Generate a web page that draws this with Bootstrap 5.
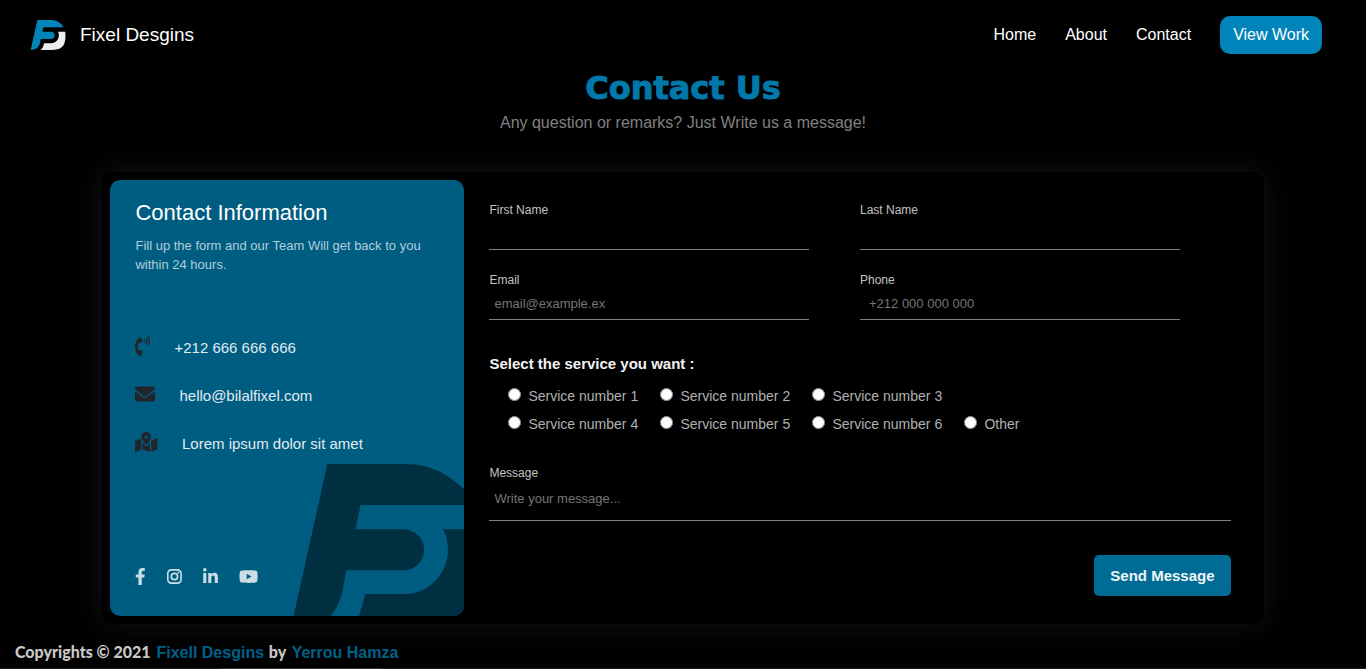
<!DOCTYPE html>
<html lang="en">
<head>
<meta charset="utf-8">
<meta name="viewport" content="width=device-width, initial-scale=1">
<title>Fixel Desgins - Contact</title>
<link href="https://cdn.jsdelivr.net/npm/bootstrap@5.3.0/dist/css/bootstrap.min.css" rel="stylesheet">
<style>
  body { background: #000; color: #fff; font-family: "Liberation Sans", Arial, sans-serif; }
  a { text-decoration: none; }
  .site-nav { min-height: 70px; padding: 0 44px 0 30px; }
  .brand { gap: 14px; }
  .brand-name { font-size: 19px; }
  .nav-links { gap: 29px; }
  .site-nav .nav-link { color: #fff; padding: 0; }
  .btn-work { background: #0084b9; color: #fff; border-radius: 10px; }
  .btn-work:hover { background: #00739f; color: #fff; }
  .page-title { font-family: "Arial Black", "DejaVu Sans", sans-serif; font-weight: 900; font-size: 32px; line-height: 36px; color: #0078a9; -webkit-text-stroke: 1px #0078a9; }
  .page-sub { color: #808080; line-height: 24px; margin-top: 5px; }
  .contact-box { width: 85%; margin-top: 37px; padding: 8px; border-radius: 10px; background: #000; box-shadow: 0 0 30px rgba(255, 255, 255, .08); }
  .info { width: 354px; min-height: 436px; padding: 17px 25px 31px; border-radius: 10px; background: #005d82; }
  .info h2 { font-size: 22px; line-height: 32px; font-weight: 400; }
  .info-lead { font-size: 13px; line-height: 19px; color: #b0cdd9; margin: 7px 0 0; }
  .info-list { margin: 50px 0 0; font-size: 15px; color: #e0ebf0; }
  .info-list li { height: 48px; gap: 24px; }
  .info-list svg { height: 20px; margin-bottom: 4px; fill: #212529; }
  .social { gap: 21px; }
  .social svg { height: 17px; fill: #cbdde5; display: block; }
  .watermark { right: -20px; bottom: -16px; width: 194px; height: 168px; fill: #002f42; }
  .contact-form { padding: 20px 25px; }
  .field { padding-right: 51px; height: 70px; }
  .tag { display: block; font-size: 12px; line-height: 20px; color: #c4c4c4; }
  .line-input { display: block; width: 100%; background: transparent; border: 0; border-bottom: 1px solid #808080; border-radius: 0; color: #fff; font-size: 13px; height: 30px; padding: 0 5px 2px; outline: 0; resize: none; }
  .line-input::placeholder { color: #757575; opacity: 1; }
  #phone { padding-left: 9px; }
  .services legend { font-size: 15px; line-height: 20px; font-weight: 700; margin: 0; color: #f2f2f2; }
  .services { margin-top: 14px; }
  .service-grid { grid-template-columns: repeat(4, 152px); padding: 8px 0 0 19px; font-size: 14px; color: #b0b0b0; }
  .service-grid label { height: 28px; gap: 7px; }
  .service-grid label:nth-child(4) { grid-column-start: 1; }
  .service-grid input { width: 13px; height: 13px; margin: 0 0 3px; }
  .message { margin-top: 25px; }
  .message .line-input { height: 38px; padding-top: 6px; }
  .btn-send { background: #006c95; color: #f0f5f8; font-size: 15px; font-weight: 700; line-height: 29px; padding: 6px 16px; border-radius: 5px; margin-top: 34px; }
  .btn-send:hover { background: #005d82; color: #fff; }
  .site-footer { padding: 16px 15px 3px; font-family: Lato, sans-serif; font-weight: 900; font-size: 16px; line-height: 24px; color: #c8c8c8; }
  .site-footer a { font-family: "Liberation Sans", Arial, sans-serif; font-weight: 700; color: #006188; margin: 0 1px 0 2px; }
  .edge { height: 2px; background: #1c1b1b; padding-left: 222px; }
  .edge span { width: 160px; background: #333; }
</style>
</head>
<body class="min-vh-100 d-flex flex-column">
<svg class="d-none" aria-hidden="true">
  <symbol id="mark-f" viewBox="59 42 582 504"><path d="M171 42H405C490 42 545 82 588 124L612 165H271L255 238H400a61.5 61.5 0 0 1 0 123H228L216 425C206 465 190 490 170 510C145 534 110 546 59 546Z"/></symbol>
  <symbol id="mark-d" viewBox="59 42 582 504"><path d="M517 238H640C660 480 590 546 400 546H221C248 530 262 508 268 492L285 432H405C480 432 533 365 533 300C533 275 527 253 517 238Z"/></symbol>
</svg>

<nav class="site-nav d-flex align-items-center justify-content-between">
  <a href="#" class="brand d-flex align-items-center text-white">
    <svg width="36" height="30" aria-hidden="true"><use href="#mark-f" fill="#0084b9"/><use href="#mark-d" fill="#eee"/></svg>
    <span class="brand-name">Fixel Desgins</span>
  </a>
  <div class="nav-links d-flex align-items-center">
    <a class="nav-link" href="#">Home</a>
    <a class="nav-link" href="#">About</a>
    <a class="nav-link" href="#">Contact</a>
    <button type="button" class="btn btn-work">View Work</button>
  </div>
</nav>

<header class="text-center">
  <h1 class="page-title m-0">Contact Us</h1>
  <p class="page-sub mb-0">Any question or remarks? Just Write us a message!</p>
</header>

<main class="contact-box d-flex mx-auto">
  <section class="info position-relative overflow-hidden d-flex flex-column flex-shrink-0">
    <h2 class="m-0">Contact Information</h2>
    <p class="info-lead">Fill up the form and our Team Will get back to you within 24 hours.</p>
    <ul class="info-list list-unstyled">
      <li class="d-flex align-items-center"><svg viewBox="0 0 384 512" aria-hidden="true"><path d="M97.333 506.966c-129.874-129.874-129.681-340.252 0-469.933 5.698-5.698 14.527-6.632 21.263-2.422l64.817 40.513a17.187 17.187 0 0 1 6.849 20.958l-32.408 81.021a17.188 17.188 0 0 1-17.669 10.719l-55.81-5.58c-21.051 58.261-20.612 122.471 0 179.515l55.811-5.581a17.188 17.188 0 0 1 17.669 10.719l32.408 81.022a17.188 17.188 0 0 1-6.849 20.958l-64.817 40.513a17.19 17.19 0 0 1-21.264-2.422zM247.126 95.473c11.832 20.047 11.832 45.008 0 65.055-3.95 6.693-13.108 7.959-18.718 2.581l-5.975-5.726c-3.911-3.748-4.793-9.622-2.261-14.41a32.063 32.063 0 0 0 0-29.945c-2.533-4.788-1.65-10.662 2.261-14.41l5.975-5.726c5.61-5.378 14.768-4.112 18.718 2.581zm91.787-91.187c60.14 71.604 60.092 175.882 0 247.428-4.474 5.327-12.53 5.746-17.552.933l-5.798-5.557c-4.56-4.371-4.977-11.529-.93-16.379 49.687-59.538 49.646-145.933 0-205.422-4.047-4.85-3.631-12.008.93-16.379l5.798-5.557c5.022-4.813 13.078-4.394 17.552.933zm-45.972 44.941c36.05 46.322 36.108 111.149 0 157.546-4.39 5.641-12.697 6.251-17.856 1.304l-5.818-5.579c-4.4-4.219-4.998-11.095-1.285-15.931 26.536-34.564 26.534-82.572 0-117.134-3.713-4.836-3.115-11.711 1.285-15.931l5.818-5.579c5.159-4.947 13.466-4.337 17.856 1.304z"/></svg><span>+212 666 666 666</span></li>
      <li class="d-flex align-items-center"><svg viewBox="0 0 512 512" aria-hidden="true"><path d="M502.3 190.8c3.9-3.1 9.7-.2 9.7 4.7V400c0 26.5-21.5 48-48 48H48c-26.5 0-48-21.5-48-48V195.6c0-5 5.7-7.8 9.7-4.7 22.4 17.4 52.1 39.5 154.1 113.6 21.1 15.4 56.7 47.8 92.2 47.6 35.7.3 72-32.8 92.3-47.6 102-74.1 131.6-96.3 154-113.7zM256 320c23.2.4 56.6-29.2 73.4-41.4 132.7-96.3 142.8-104.7 173.4-128.7 5.8-4.5 9.2-11.5 9.2-18.9v-19c0-26.5-21.5-48-48-48H48c-26.5 0-48 21.5-48 48v19c0 7.4 3.4 14.3 9.2 18.9 30.6 23.9 40.7 32.4 173.4 128.7 16.8 12.2 50.2 41.8 73.4 41.4z"/></svg><span>hello@bilalfixel.com</span></li>
      <li class="d-flex align-items-center"><svg viewBox="0 0 576 512" aria-hidden="true"><path d="M288 0c-69.59 0-126 56.41-126 126 0 56.26 82.35 158.8 113.9 196.02 6.39 7.54 17.82 7.54 24.2 0C331.65 284.8 414 182.26 414 126 414 56.41 357.59 0 288 0zm0 168c-23.2 0-42-18.8-42-42s18.8-42 42-42 42 18.8 42 42-18.8 42-42 42zM20.12 215.95A32.006 32.006 0 0 0 0 245.66v250.32c0 11.32 11.43 19.06 21.94 14.86L160 448V214.92c-8.84-15.98-16.07-31.54-21.25-46.42L20.12 215.95zM288 359.67c-14.07 0-27.38-6.18-36.51-16.96-19.66-23.2-40.57-49.62-59.49-76.72v182l192 64V266c-18.92 27.09-39.82 53.52-59.49 76.72-9.13 10.77-22.44 16.95-36.51 16.95zm266.06-198.51L416 224v288l139.88-55.95A31.996 31.996 0 0 0 576 426.34V176.02c0-11.32-11.43-19.06-21.94-14.86z"/></svg><span>Lorem ipsum dolor sit amet</span></li>
    </ul>
    <div class="social d-flex mt-auto">
      <a href="#" aria-label="Facebook"><svg viewBox="0 0 320 512"><path d="M279.14 288l14.22-92.66h-88.91v-60.13c0-25.35 12.42-50.06 52.24-50.06h40.42V6.26S260.43 0 225.36 0c-73.22 0-121.08 44.38-121.08 124.72v70.62H22.89V288h81.39v224h100.17V288z"/></svg></a>
      <a href="#" aria-label="Instagram"><svg viewBox="0 0 448 512"><path fill-rule="evenodd" d="M130 32H318A130 130 0 0 1 448 162V350A130 130 0 0 1 318 480H130A130 130 0 0 1 0 350V162A130 130 0 0 1 130 32ZM132 80A84 84 0 0 0 48 164V348A84 84 0 0 0 132 432H316A84 84 0 0 0 400 348V164A84 84 0 0 0 316 80ZM224 136a120 120 0 1 1 0 240 120 120 0 0 1 0-240ZM224 186a70 70 0 1 0 0 140 70 70 0 0 0 0-140Z"/><circle cx="343" cy="137" r="30"/></svg></a>
      <a href="#" aria-label="LinkedIn"><svg viewBox="0 0 448 512"><path d="M100.28 448H7.4V148.9h92.88zM53.79 108.1C24.09 108.1 0 83.5 0 53.8a53.79 53.79 0 0 1 107.58 0c0 29.7-24.1 54.3-53.79 54.3zM447.9 448h-92.68V302.4c0-34.7-.7-79.2-48.29-79.2-48.29 0-55.69 37.7-55.69 76.7V448h-92.78V148.9h89.08v40.8h1.3c12.4-23.5 42.69-48.3 87.88-48.3 94 0 111.28 61.9 111.28 142.3V448z"/></svg></a>
      <a href="#" aria-label="YouTube"><svg viewBox="0 0 576 512"><path d="M549.655 124.083c-6.281-23.65-24.787-42.276-48.284-48.597C458.781 64 288 64 288 64S117.22 64 74.629 75.486c-23.497 6.322-42.003 24.947-48.284 48.597-11.412 42.867-11.412 132.305-11.412 132.305s0 89.438 11.412 132.305c6.281 23.65 24.787 41.5 48.284 47.821C117.22 448 288 448 288 448s170.78 0 213.371-11.486c23.497-6.321 42.003-24.171 48.284-47.821 11.412-42.867 11.412-132.305 11.412-132.305s0-89.438-11.412-132.305zm-317.51 213.508V175.185l142.739 81.205-142.739 81.201z"/></svg></a>
    </div>
    <svg class="watermark position-absolute" aria-hidden="true"><use href="#mark-f"/><use href="#mark-d"/></svg>
  </section>

  <form class="contact-form flex-grow-1">
    <div class="row g-0">
      <div class="col-6 field"><label class="tag" for="first">First Name</label><input class="line-input" id="first" type="text"></div>
      <div class="col-6 field"><label class="tag" for="last">Last Name</label><input class="line-input" id="last" type="text"></div>
      <div class="col-6 field"><label class="tag" for="email">Email</label><input class="line-input" id="email" type="email" placeholder="email@example.ex"></div>
      <div class="col-6 field"><label class="tag" for="phone">Phone</label><input class="line-input" id="phone" type="tel" placeholder="+212 000 000 000"></div>
    </div>
    <fieldset class="services">
      <legend>Select the service you want :</legend>
      <div class="service-grid d-grid">
        <label class="d-flex align-items-center"><input type="radio" name="service">Service number 1</label>
        <label class="d-flex align-items-center"><input type="radio" name="service">Service number 2</label>
        <label class="d-flex align-items-center"><input type="radio" name="service">Service number 3</label>
        <label class="d-flex align-items-center"><input type="radio" name="service">Service number 4</label>
        <label class="d-flex align-items-center"><input type="radio" name="service">Service number 5</label>
        <label class="d-flex align-items-center"><input type="radio" name="service">Service number 6</label>
        <label class="d-flex align-items-center"><input type="radio" name="service">Other</label>
      </div>
    </fieldset>
    <div class="message"><label class="tag" for="msg">Message</label><textarea class="line-input" id="msg" rows="1" placeholder="Write your message..."></textarea></div>
    <div class="text-end"><button type="button" class="btn btn-send border-0">Send Message</button></div>
  </form>
</main>

<footer class="site-footer">Copyrights © 2021 <a href="#">Fixell Desgins</a> by <a href="#">Yerrou Hamza</a></footer>
<div class="edge d-flex mt-auto"><span></span></div>
<script src="https://cdn.jsdelivr.net/npm/bootstrap@5.3.0/dist/js/bootstrap.bundle.min.js"></script>
</body>
</html>
